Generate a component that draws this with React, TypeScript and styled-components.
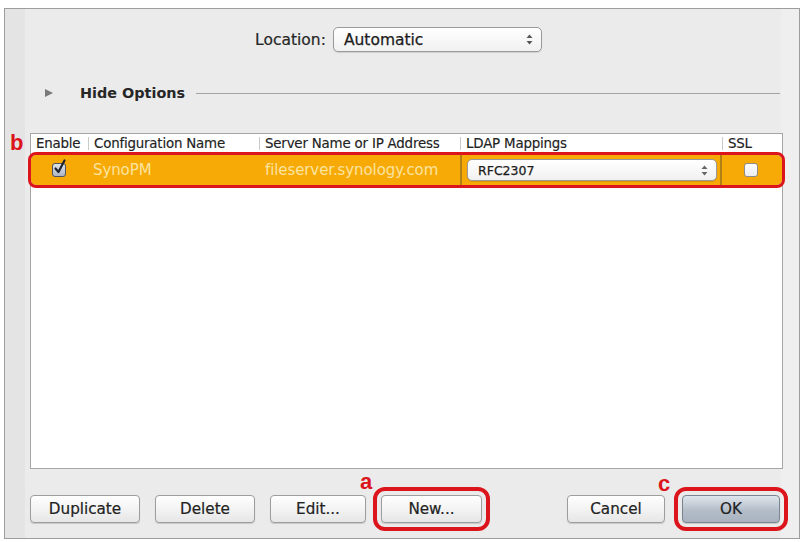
import React from "react";
import styled, { createGlobalStyle } from "styled-components";

const red = "#dc151c";
const orange = "#f7aa06";

const GlobalStyle = createGlobalStyle`
  body {
    margin: 0;
    background: #fff;
    font-family: "DejaVu Sans", "Liberation Sans", sans-serif;
    color: #1a1a1a;
  }
`;

const Window = styled.div`
  position: relative;
  box-sizing: border-box;
  margin: 8px 0 0 4px;
  width: 796px;
  height: 531px;
  border: 1px solid #9d9d9d;
  background: linear-gradient(
    90deg,
    #e4e4e4 0,
    #e4e4e4 20px,
    #ebebeb 20px,
    #ebebeb 776px,
    #efefef 776px
  );
  display: flex;
  flex-direction: column;
  padding: 18px 16px 0 25px;
`;

const TopBar = styled.div`
  display: flex;
  align-items: center;
  justify-content: center;
  gap: 7px;
  height: 25px;
  padding-right: 16px;
`;

const Label = styled.span`
  font-size: 15.5px;
  color: #262626;
  -webkit-text-stroke: 0.2px #262626;
`;

const PopUp = styled.div<{ $width: number; $height: number }>`
  box-sizing: border-box;
  display: flex;
  align-items: center;
  justify-content: space-between;
  width: ${(p) => p.$width}px;
  height: ${(p) => p.$height}px;
  padding: 0 8px 0 10px;
  border: 1px solid #9a9a9a;
  border-radius: 5px;
  background: linear-gradient(#ffffff, #f1f1f1);
  box-shadow: 0 1px 1px rgba(0, 0, 0, 0.12);
`;

const PopUpText = styled.span<{ $size: number }>`
  font-size: ${(p) => p.$size}px;
  color: #1c1c1c;
  -webkit-text-stroke: 0.25px #1c1c1c;
`;

const OptionsRow = styled.div`
  display: flex;
  align-items: center;
  height: 20px;
  margin-top: 31px;
`;

const Disclosure = styled.span`
  width: 0;
  height: 0;
  margin-left: 15px;
  border-top: 4.5px solid transparent;
  border-bottom: 4.5px solid transparent;
  border-left: 8px solid #7a7a7a;
`;

const OptionsTitle = styled.span`
  margin-left: 27px;
  font-size: 14.4px;
  font-weight: bold;
  color: #262626;
`;

const Rule = styled.div`
  flex: 1;
  height: 1px;
  margin: 0 3px 0 11px;
  background: #a3a3a3;
`;

const Table = styled.div`
  box-sizing: border-box;
  height: 336px;
  margin-top: 30px;
  border: 1px solid #a6a6a6;
  background: #fff;
`;

const columns = "57px 171px 201px 262px 1fr";

const HeaderRow = styled.div`
  display: grid;
  grid-template-columns: ${columns};
  height: 19px;
`;

const HeaderCell = styled.div<{ $first?: boolean }>`
  display: flex;
  align-items: center;
  gap: 5px;
  padding-left: ${(p) => (p.$first ? 5 : 0)}px;
  font-size: 13.4px;
  letter-spacing: -0.2px;
  color: #222;
  white-space: nowrap;
  -webkit-text-stroke: 0.15px #222;
`;

const Divider = styled.span`
  width: 1px;
  height: 13px;
  background: #c9c9c9;
`;

const DataRow = styled.div`
  display: grid;
  grid-template-columns: ${columns};
  height: 30px;
  margin-top: 2px;
  background: ${orange};
  border-radius: 5px;
  outline: 3px solid ${red};
  outline-offset: 0;
`;

const Cell = styled.div<{ $pad: number }>`
  display: flex;
  align-items: center;
  padding-left: ${(p) => p.$pad}px;
  font-size: 15px;
  letter-spacing: -0.1px;
  color: #fbe3a0;
  white-space: nowrap;
`;

const EditCell = styled.div`
  display: flex;
  align-items: center;
  padding: 0 3px 0 5px;
  border-left: 2px solid #b18013;
  border-right: 2px solid #b18013;
`;

const CheckBox = styled.span<{ $checked?: boolean }>`
  position: relative;
  box-sizing: border-box;
  display: inline-block;
  width: 14px;
  height: 14px;
  border: 1px solid ${(p) => (p.$checked ? "#4d5460" : "#8c8c8c")};
  border-radius: 3px;
  background: ${(p) =>
    p.$checked
      ? "linear-gradient(#dfe3ea, #aeb6c3)"
      : "linear-gradient(#ffffff, #ececec)"};
`;

const CheckMark = styled.svg`
  position: absolute;
  left: 0;
  top: -5px;
`;

const ButtonBar = styled.div`
  display: flex;
  align-items: center;
  margin-top: 26px;
`;

const ButtonGroup = styled.div<{ $gap: number; $trail?: number }>`
  display: flex;
  gap: ${(p) => p.$gap}px;
  margin-right: ${(p) => p.$trail ?? 0}px;
`;

const Spacer = styled.div`
  flex: 1;
`;

const Button = styled.button<{ $width: number; $default?: boolean; $marked?: boolean }>`
  box-sizing: border-box;
  width: ${(p) => p.$width}px;
  height: 28px;
  padding: 0;
  font-family: "DejaVu Sans", "Liberation Sans", sans-serif;
  font-size: 15.2px;
  color: #222;
  -webkit-text-stroke: 0.2px #222;
  border: 1px solid ${(p) => (p.$default ? "#7b8592" : "#9d9d9d")};
  border-radius: 4px;
  background: ${(p) =>
    p.$default
      ? "linear-gradient(#dfe5ec, #b4bec9 55%, #a9b3bf)"
      : "linear-gradient(#ffffff, #f3f3f3 50%, #e6e6e6)"};
  box-shadow: 0 1px 1px rgba(0, 0, 0, 0.15);
  outline: ${(p) => (p.$marked ? `4px solid ${red}` : "none")};
  outline-offset: 4px;
`;

const Marker = styled.span<{ $left: number; $top: number }>`
  position: absolute;
  left: ${(p) => p.$left}px;
  top: ${(p) => p.$top}px;
  font-family: "Liberation Sans", Arial, sans-serif;
  font-size: 22px;
  font-weight: bold;
  line-height: 22px;
  color: ${red};
`;

const Stepper = ({ color = "#555" }: { color?: string }) => (
  <svg width="7" height="11" viewBox="0 0 7 11">
    <path d="M3.5 0.5 L6.5 4 L0.5 4 Z" fill={color} />
    <path d="M3.5 10.5 L6.5 7 L0.5 7 Z" fill={color} />
  </svg>
);

const headers = [
  "Enable",
  "Configuration Name",
  "Server Name or IP Address",
  "LDAP Mappings",
  "SSL",
];

export default function App() {
  return (
    <>
      <GlobalStyle />
      <Window>
        <TopBar>
          <Label>Location:</Label>
          <PopUp $width={209} $height={25}>
            <PopUpText $size={15.5}>Automatic</PopUpText>
            <Stepper />
          </PopUp>
        </TopBar>

        <OptionsRow>
          <Disclosure />
          <OptionsTitle>Hide Options</OptionsTitle>
          <Rule />
        </OptionsRow>

        <Table>
          <HeaderRow>
            {headers.map((h, i) => (
              <HeaderCell key={h} $first={i === 0}>
                {i > 0 && <Divider />}
                {h}
              </HeaderCell>
            ))}
          </HeaderRow>
          <DataRow>
            <Cell $pad={21}>
              <CheckBox $checked>
                <CheckMark width="14" height="16" viewBox="0 0 14 16">
                  <path
                    d="M2.5 9.5 L5.5 13 L11.5 1.5"
                    fill="none"
                    stroke="#1d2430"
                    strokeWidth="2.2"
                    strokeLinecap="round"
                    strokeLinejoin="round"
                  />
                </CheckMark>
              </CheckBox>
            </Cell>
            <Cell $pad={5}>SynoPM</Cell>
            <Cell $pad={6}>fileserver.synology.com</Cell>
            <EditCell>
              <PopUp $width={250} $height={22}>
                <PopUpText $size={12.5}>RFC2307</PopUpText>
                <Stepper color="#666" />
              </PopUp>
            </EditCell>
            <Cell $pad={22}>
              <CheckBox />
            </Cell>
          </DataRow>
        </Table>

        <ButtonBar>
          <ButtonGroup $gap={15}>
            <Button $width={110}>Duplicate</Button>
            <Button $width={100}>Delete</Button>
            <Button $width={96}>Edit...</Button>
            <Button $width={101} $marked>
              New...
            </Button>
          </ButtonGroup>
          <Spacer />
          <ButtonGroup $gap={17} $trail={3}>
            <Button $width={98}>Cancel</Button>
            <Button $width={98} $default $marked>
              OK
            </Button>
          </ButtonGroup>
        </ButtonBar>

        <Marker $left={5} $top={123}>b</Marker>
        <Marker $left={355} $top={462}>a</Marker>
        <Marker $left={653} $top={464}>c</Marker>
      </Window>
    </>
  );
}
